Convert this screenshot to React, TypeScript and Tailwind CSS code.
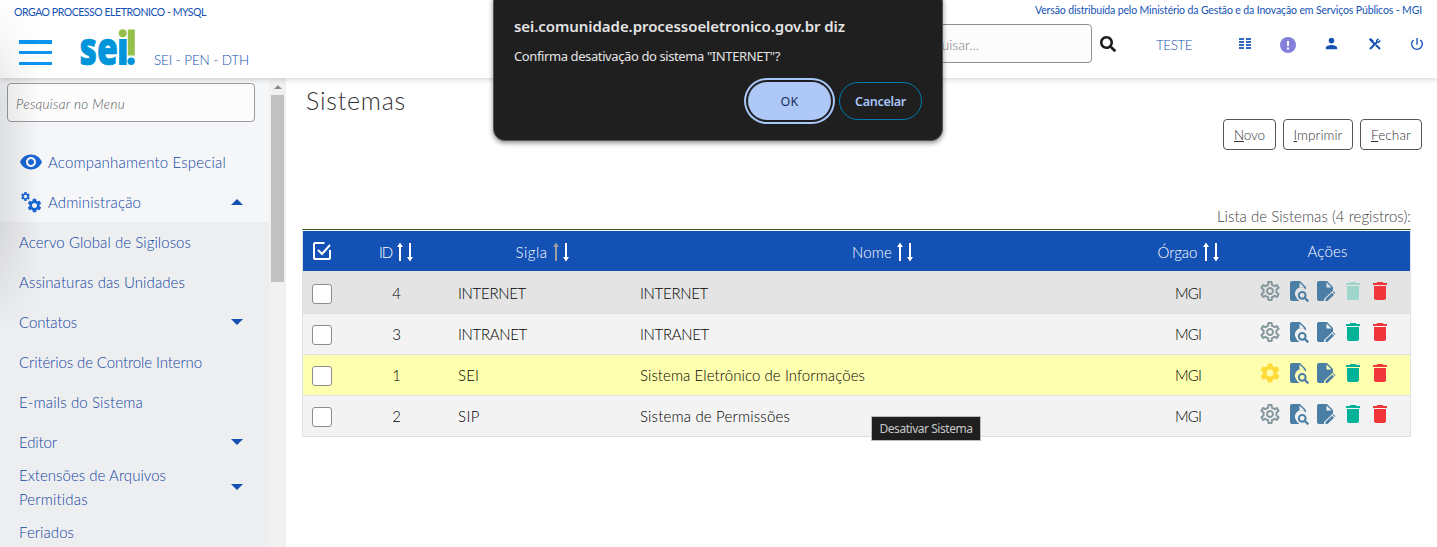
import React from 'react';
import { MdDelete, MdOutlineSettings, MdSettings, MdVisibility, MdPerson, MdPowerSettingsNew } from 'react-icons/md';
import { FaSearch } from 'react-icons/fa';

const Fit = ({ w, children, cls = '' }: { w: number; children: React.ReactNode; cls?: string }) => {
  const ref = React.useRef<HTMLSpanElement>(null);
  const [ls, setLs] = React.useState(0);
  React.useLayoutEffect(() => {
    const el = ref.current;
    if (!el) return;
    const n = (el.textContent || '').length;
    setLs((w - el.getBoundingClientRect().width) / n);
  }, [w]);
  return <span ref={ref} className={'whitespace-nowrap ' + cls} style={{ letterSpacing: ls }}>{children}</span>;
};

const Gear = ({ on }: { on?: boolean }) =>
  on ? <MdSettings className="size-6 text-[#ffdb3a]" /> : <MdOutlineSettings className="size-6 text-[#85999f]" />;

const DocSearch = () => (
  <svg viewBox="0 0 24 24" className="size-6" fill="#4a7ea5">
    <path d="M5 2H13L19 8V10.600A5.800 5.800 0 0 0 9.300 18.600A6 6 0 0 0 12 21.500V22H5A2 2 0 0 1 3 20V4A2 2 0 0 1 5 2ZM12.500 3.500V8.500H17.500Z" fillRule="evenodd" />
    <circle cx="15.200" cy="16.300" r="3.400" fill="none" stroke="#4a7ea5" strokeWidth="2" />
    <path d="M17.600 18.700L21.300 22.400" stroke="#4a7ea5" strokeWidth="2.200" />
  </svg>
);

const DocEdit = () => (
  <svg viewBox="0 0 24 24" className="size-6" fill="#4a7ea5">
    <path d="M5 2H13L19 8V11.500L10 20V22H5A2 2 0 0 1 3 20V4A2 2 0 0 1 5 2ZM12.500 3.500V8.500H17.500Z" fillRule="evenodd" />
    <path d="M11.500 20L18 13.700L20 15.700L13.500 22H11.500ZM18.700 13L19.500 12.200L21.500 14.200L20.700 15Z" />
  </svg>
);

const Sort = ({ dim }: { dim?: boolean }) => (
  <svg viewBox="0 0 16 20" className="ml-[5px] h-5 w-4">
    <path d="M2 19V5H0L3 .5L6 5H4V19Z" fill={dim ? '#a0a0a0' : '#fff'} />
    <path d="M12 1V15H10L13 19.500L16 15H14V1Z" fill="#fff" />
  </svg>
);

const menu: [string, number, string][] = [
  ['Acervo Global de Sigilosos', 172, ''],
  ['Assinaturas das Unidades', 166, ''],
  ['Contatos', 58, 'down'],
  ['Critérios de Controle Interno', 183, ''],
  ['E-mails do Sistema', 124, ''],
  ['Editor', 38, 'down'],
];

const Down = () => <svg viewBox="0 0 12 6" className="h-1.5 w-3" fill="#1351b4"><path d="M0 0H12L6 6Z" /></svg>;

const rows: [string, string, number, string, number][] = [
  ['4', 'INTERNET', 68, 'INTERNET', 68],
  ['3', 'INTRANET', 69, 'INTRANET', 69],
  ['1', 'SEI', 21, 'Sistema Eletrônico de Informações', 225],
  ['2', 'SIP', 22, 'Sistema de Permissões', 150],
];
const rowBg = ['bg-[#e4e4e4]', 'bg-[#f3f3f3]', 'bg-[#ffffb0]', 'bg-[#f3f3f3]'];
const cols = 'grid grid-cols-[39px_109px_182px_499px_112px_167px]';

const buttons: [string, string, number, string][] = [
  ['N', 'ovo', 31, 'w-[53px]'],
  ['I', 'mprimir', 49, 'w-[70px]'],
  ['F', 'echar', 40, 'w-[62px]'],
];

function Header() {
  return (
    <header className="relative z-10 flex h-[78px] justify-between bg-white shadow-[0_1px_6px_rgba(0,0,0,0.2)]">
      <div className="pl-[14px] pt-[4px]">
        <div className="flex h-4 items-center pt-px text-[10.500px] text-[#1351b4]"><Fit w={192}>ORGAO PROCESSO ELETRONICO - MYSQL</Fit></div>
        <div className="flex">
          <div className="ml-[5px] mt-5 flex h-[25px] w-[33px] flex-col justify-between">
            <i className="h-[3.500px] bg-[#0d95f2]" /><i className="h-[3.500px] bg-[#0d95f2]" /><i className="h-[3.500px] bg-[#0d95f2]" />
          </div>
          <svg viewBox="0 0 56 38" className="ml-[27px] mt-2 h-[38px] w-14 overflow-visible" role="img" aria-label="sei!">
            <text x="0.500" y="36.500" textLength="38.500" lengthAdjust="spacingAndGlyphs" fontFamily="Open Sans" fontWeight="800" fontSize="46" fill="#0095da" stroke="#0095da" strokeWidth="0.700">se</text>
            <rect x="40.200" y="11" width="7.500" height="26" fill="#0095da" />
            <circle cx="43.700" cy="5.200" r="4" fill="#94c04b" />
            <rect x="48.800" y="1.500" width="7" height="26" fill="#94c04b" />
            <circle cx="52.200" cy="33.300" r="3.700" fill="#0095da" />
          </svg>
          <div className="ml-[19px] mt-[30px] text-[13.500px] font-light leading-5 text-[#1351b4]"><Fit w={95}>SEI - PEN - DTH</Fit></div>
        </div>
      </div>
      <div className="flex flex-col items-end pr-3 pt-[2px]">
        <div className="mr-[3px] flex h-4 items-center pt-px text-[10.500px] text-[#1351b4]"><Fit w={387}>Versão distribuída pelo Ministério da Gestão e da Inovação em Serviços Públicos - MGI</Fit></div>
        <div className="mt-[6px] flex h-[39px] items-center text-[#1351b4]">
          <div className="flex h-[39px] w-[180px] items-center rounded border border-[#8d8f91] bg-[#fcfcfc] pt-0.5 text-sm font-light text-[#777]"><Fit w={66}>Pesquisar...</Fit></div>
          <FaSearch className="ml-2 size-4 text-[#1c1c1c]" />
          <span className="ml-[40px] w-9 pt-1 text-[13.500px] font-light"><Fit w={36}>TESTE</Fit></span>
          <svg viewBox="0 0 12 12" className="ml-[47px] h-3 w-3" fill="#2f68c0"><path d="M0 0h5v2H0zM0 3h5v2H0zM0 6h5v2H0zM0 9h5v2H0zM7 0h5v2H7zM7 3h5v2H7zM7 6h5v2H7zM7 9h5v2H7z" /></svg>
          <svg viewBox="0 0 16 16" className="ml-[29px] mt-0.5 size-4"><circle cx="8" cy="8" r="8" fill="#8580d9" /><path d="M7 4h2v5H7zM7 10.500h2v2H7z" fill="#fff" /></svg>
          <MdPerson className="ml-[27px] size-[17px]" />
          <svg viewBox="0 0 12 12" className="ml-[29px] size-3" fill="none" stroke="#1351b4"><path d="M1 11L8 4M7 7L11 11M3.500 4L5 5.500" strokeWidth="2" /><path d="M11.300 2.500L9.500 4.300L7.700 4.300L7.700 2.500L9.500 .7" strokeWidth="1.500" /><path d="M.8 .8L4 4" strokeWidth="2.600" /></svg>
          <MdPowerSettingsNew className="ml-[28px] size-4" />
        </div>
      </div>
    </header>
  );
}

export default function App() {
  return (
    <div className="relative h-[547px] w-[1437px] overflow-hidden bg-white font-['Lato',sans-serif]">
      <Header />
      <div className="flex h-[469px]">
        <aside className="flex w-[286px] bg-[#f5f6f8]">
          <div className="w-[269px] text-[15px] font-light leading-6 text-[#1346a4]">
            <div className="ml-[7px] mt-[5px] flex h-[39px] w-[248px] items-center rounded border border-[#9a9c9f] bg-[#fcfcfc] pl-2 pt-0.5 text-[13.500px] italic text-[#555]"><Fit w={109}>Pesquisar no Menu</Fit></div>
            <div className="mt-5 flex h-10 items-center pl-[19px]"><MdVisibility className="mr-[5px] size-6 text-[#1a66d4]" /><Fit w={178}>Acompanhamento Especial</Fit></div>
            <div className="flex h-10 items-center pl-[19px] pr-[26px]">
              <span className="relative mr-[5px] size-6 text-[#1a66d4]"><MdSettings className="absolute left-px top-px size-[11px]" /><MdSettings className="absolute left-[7px] top-[7px] size-[17px]" /></span>
              <Fit w={93}>Administração</Fit>
              <span className="ml-auto rotate-180"><Down /></span>
            </div>
            <div className="h-[330px] bg-[#edeef0] pl-[19px] pr-[26px]">
              {menu.map(([t, w, d]) => <div key={t} className="flex h-10 items-center justify-between"><Fit w={w}>{t}</Fit>{d && <Down />}</div>)}
              <div className="flex h-[50px] items-center justify-between"><span className="pb-px"><Fit w={147} cls="block w-fit">Extensões de Arquivos</Fit><Fit w={69} cls="block w-fit">Permitidas</Fit></span><Down /></div>
              <div className="flex h-10 items-center"><Fit w={55}>Feriados</Fit></div>
            </div>
          </div>
          <div className="flex w-[17px] flex-col items-center bg-[#f1f1f1]">
            <div className="flex h-[17px] items-center"><svg viewBox="0 0 8 4" className="h-1 w-2" fill="#8b8b8b"><path d="M0 4H8L4 0Z" /></svg></div>
            <div className="h-[187px] w-[13px] bg-[#c1c1c1]" />
          </div>
        </aside>
        <main className="ml-4 w-[1120px]">
          <h1 className="ml-1 mt-[5px] h-[35px] text-[25px] font-light leading-[34px] text-[#333]"><Fit w={100}>Sistemas</Fit></h1>
          <div className="mt-px flex h-[31px] justify-end gap-[7px]">
            {buttons.map(([a, b, w, c]) => <button key={b} className={'flex items-center justify-center rounded border border-[#555] pt-0.5 text-[13.500px] font-light text-[#333] ' + c}><Fit w={w}><u>{a}</u>{b}</Fit></button>)}
          </div>
          <div className="mr-[11px] mt-[53px] flex h-[26px] items-center justify-end text-[15px] font-light text-[#444]"><Fit w={194}>Lista de Sistemas (4 registros):</Fit></div>
          <div className="w-[1109px] border-x border-t border-[#dee2e6] border-t-[#3b5520] text-[15px] font-light text-black">
            <div className={cols + ' mt-px h-10 items-center bg-[#1351b4] text-white'}>
              <svg viewBox="0 0 18 18" className="ml-[10px] size-[18px]" fill="none" stroke="white" strokeWidth="2"><path d="M11.500 1H2Q1 1 1 2V16Q1 17 2 17H16Q17 17 17 16V8M5 8L9 12L17 3" /></svg>
              <div className="flex items-center justify-center pr-px pt-[2px]"><Fit w={13}>ID</Fit><Sort /></div>
              <div className="flex items-center justify-center pt-[2px]"><Fit w={32}>Sigla</Fit><Sort dim /></div>
              <div className="flex items-center justify-center pt-[2px]"><Fit w={40}>Nome</Fit><Sort /></div>
              <div className="flex items-center justify-center pt-[2px]"><Fit w={40}>Órgao</Fit><Sort /></div>
              <div className="pt-px text-center"><Fit w={40}>Ações</Fit></div>
            </div>
            {rows.map(([id, s, sw, n, nw], i) => (
              <div key={id} className={cols + ' items-center border-b border-[#dcdfe2] ' + rowBg[i] + (i === 0 ? ' h-[43px] pt-0.5' : ' h-[41px]')}>
                <span className="ml-[9px] mt-[2px] size-5 rounded-[3px] border border-[#8c8c8c] bg-white" />
                <span className="text-center">{id}</span>
                <span className="pl-[7px]"><Fit w={sw}>{s}</Fit></span>
                <span className="pl-[7px]"><Fit w={nw}>{n}</Fit></span>
                <span className="text-center"><Fit w={26}>MGI</Fit></span>
                <span className="mb-[4px] flex gap-[3px] pl-[14px]">
                  <span className="mr-[2px]"><Gear on={i === 2} /></span><DocSearch /><DocEdit />
                  <MdDelete className={'size-6 ' + (i === 0 ? 'text-[#9ed6cc]' : 'text-[#00b398]')} /><MdDelete className="size-6 text-[#f0353b]" />
                </span>
              </div>
            ))}
          </div>
        </main>
      </div>
      <div className="pointer-events-none absolute left-0 top-0 z-20 h-[330px] w-10 bg-[linear-gradient(to_right,rgba(0,0,0,0.09),transparent)] [mask-image:linear-gradient(to_bottom,transparent,black_30%,black_70%,transparent)]" />
      <div role="dialog" className="absolute left-[493px] top-[-10px] z-30 h-[151px] w-[450px] rounded-xl border border-[#555] bg-[#1f1f1f] pl-5 pt-[23px] font-['Noto_Sans'] text-[#e3e3e3] shadow-[0_2px_5px_rgba(0,0,0,0.45)]">
        <div className="flex h-6 items-center text-[15px] font-semibold"><Fit w={331}>sei.comunidade.processoeletronico.gov.br diz</Fit></div>
        <div className="mt-[9px] flex h-5 items-center text-[13px]"><Fit w={266}>Confirma desativação do sistema "INTERNET"?</Fit></div>
        <div className="mt-[15px] flex justify-end gap-[8px] pr-5 text-[12.500px]">
          <button className="flex h-[38px] w-[83px] items-center justify-center rounded-full bg-[#aec9f8] pt-0.5 text-[#15305e] shadow-[0_0_0_2px_#1f1f1f,0_0_0_4px_#a8c7fa]"><Fit w={18}>OK</Fit></button>
          <button className="flex h-[38px] w-[83px] items-center justify-center rounded-full border border-[#007ab0] pt-0.5 font-semibold text-[#a8c7fa]"><Fit w={51}>Cancelar</Fit></button>
        </div>
      </div>
      <div role="tooltip" className="absolute left-[871px] top-[416px] z-30 flex h-[25px] w-[110px] items-center justify-center border border-[#bbb] bg-[#1f1f1f] font-['Noto_Sans'] text-xs text-[#c8c8c8]"><Fit w={93}>Desativar Sistema</Fit></div>
    </div>
  );
}
